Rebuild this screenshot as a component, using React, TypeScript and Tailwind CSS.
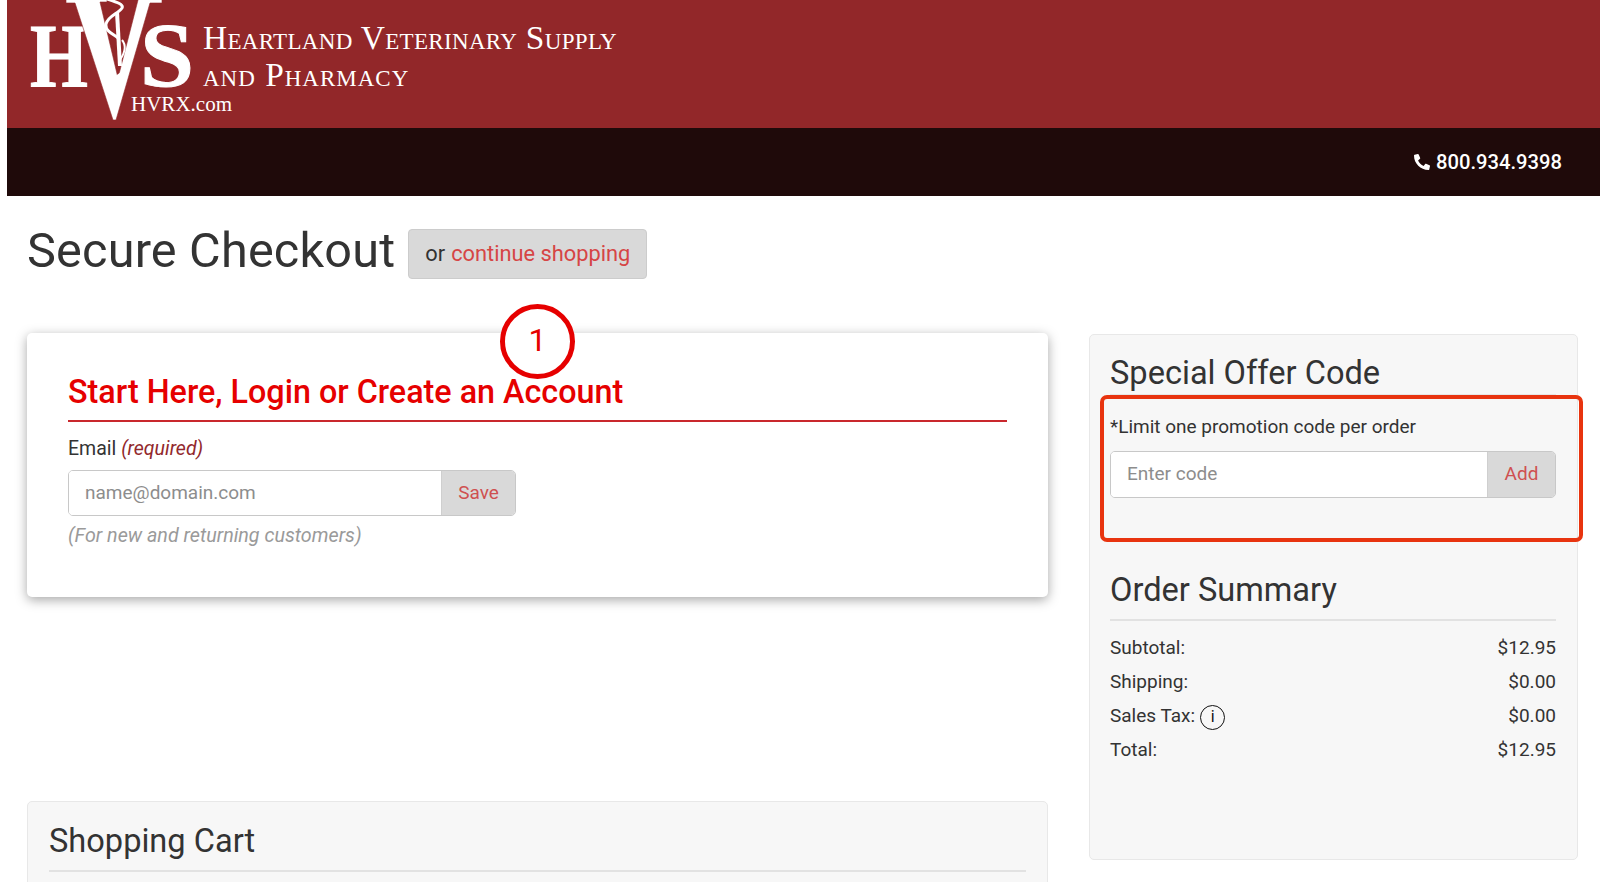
import React from "react";
import { FaPhone } from "react-icons/fa";

function Logo() {
  return (
    <svg width="196" height="128" viewBox="7 0 196 128" className="block shrink-0 overflow-visible">
      <text x="30" y="87" fill="#fff" stroke="#fff" strokeWidth="1" fontFamily="'Liberation Serif', serif" fontWeight="700" fontSize="90" textLength="58" lengthAdjust="spacingAndGlyphs">H</text>
      <text x="140" y="86" fill="#fff" stroke="#fff" strokeWidth="1" fontFamily="'Liberation Serif', serif" fontWeight="700" fontSize="92" textLength="54" lengthAdjust="spacingAndGlyphs">S</text>
      <path d="M66 -1H107V2H100L118 78L138 0H128V-1H162V3H150L116 120H113L75 3H66Z" fill="#fff" stroke="#922729" strokeWidth="0.6" />
      <path d="M104 -2C116 2 124 4 122 8C118 14 108 16 106 24C105 32 114 34 118 38" fill="none" stroke="#fff" strokeWidth="3" />
      <path d="M115 12L119 12L122 66L118 66Z" fill="#fff" />
      <path d="M122 40C127 46 124 54 120 60" fill="none" stroke="#fff" strokeWidth="2" />
      <path d="M113 78L126 68L123 80Z" fill="#fff" />
      <text x="131" y="111" fill="#fff" fontFamily="'Liberation Serif', serif" fontSize="20" textLength="101" lengthAdjust="spacingAndGlyphs">HVRX.com</text>
    </svg>
  );
}

function Heading({ children }: { children: React.ReactNode }) {
  return (
    <div className="border-b-2 border-[#e2e2e2] h-[55px] text-[32.6px] leading-[48px] text-[#333]">{children}</div>
  );
}

function Row({ label, value, info }: { label: string; value: string; info?: boolean }) {
  return (
    <div className="flex justify-between items-center h-[34px] text-[19px] text-[#333]">
      <span className="flex items-center">
        {label}
        {info && (
          <span className="ml-[5px] mt-[2px] w-[25px] h-[25px] rounded-full border-[1.5px] border-[#111] flex items-center justify-center text-[16px] leading-none text-[#111]">
            i
          </span>
        )}
      </span>
      <span>{value}</span>
    </div>
  );
}

function InputGroup({ placeholder, action, className, actionWidth }: { placeholder: string; action: string; className: string; actionWidth: string }) {
  return (
    <div className={`flex rounded-[5px] border border-[#c8c8c8] overflow-hidden ${className}`}>
      <div className="flex-1 bg-white pl-[16px] flex items-center text-[19px] text-[#8d8d8d]">{placeholder}</div>
      <div className={`bg-[#d9d9d9] flex items-center justify-center text-[19px] text-[#cf5050] border-l border-[#cfcfcf] ${actionWidth}`}>{action}</div>
    </div>
  );
}

export default function App() {
  return (
    <div className="w-[1600px] h-[882px] overflow-hidden bg-white font-['Roboto','Liberation_Sans',sans-serif]">
      <div className="ml-[7px]">
        <div className="h-[128px] bg-[#922729] flex overflow-hidden">
          <Logo />
          <div className="pt-[19px] font-['Liberation_Serif',serif] text-white text-[33.4px] leading-[37px] [font-variant:small-caps]">
            <div className="tracking-[0.33px]">Heartland Veterinary Supply</div>
            <div className="tracking-[1px]">and Pharmacy</div>
          </div>
        </div>
        <div className="h-[68px] bg-[#1f0a0a] flex items-center justify-end pr-[38px] text-white text-[20.2px] font-medium gap-[6px]">
          <FaPhone className="text-[16px] -scale-x-100" />
          <span>800.934.9398</span>
        </div>
      </div>

      <div className="pl-[27px] pr-[22px]">
        <div className="flex items-start pt-[26px] h-[137px]">
          <h1 className="text-[48.6px] leading-[58px] text-[#333] mr-[13px] tracking-[0.2px]">Secure Checkout</h1>
          <div className="mt-[7px] w-[239px] h-[50px] rounded-[4px] bg-[#d9d9d9] border border-[#ccc] flex items-center justify-center text-[21.8px] text-[#333] gap-[6px]">
            or <span className="text-[#d64545]">continue shopping</span>
          </div>
        </div>

        <div className="flex gap-[41px] items-start">
          <div className="w-[1021px] shrink-0">
            <div className="relative h-[264px] rounded-[5px] bg-white shadow-[0_3px_12px_rgba(0,0,0,0.35)] px-[41px] pt-[35px]">
              <div className="absolute left-[473px] -top-[29px] w-[75px] h-[75px] pb-[4px] rounded-full border-[5px] border-[#e60000] bg-white flex items-center justify-center text-[32px] text-[#e60000]">
                1
              </div>
              <div className="relative h-[54px] border-b-2 border-[#c9282d] text-[32.3px] leading-[48px] font-medium text-[#e60000]">
                Start Here, Login or Create an Account
              </div>
              <div className="mt-[13px] text-[19.5px] leading-[28px] text-[#333]">
                Email <em className="text-[#92282c]">(required)</em>
              </div>
              <InputGroup placeholder="name@domain.com" action="Save" className="mt-[7px] w-[448px] h-[46px]" actionWidth="w-[74px]" />
              <div className="mt-[6px] text-[19.7px] leading-[28px] italic text-[#9a9a9a]">(For new and returning customers)</div>
            </div>

            <div className="mt-[204px] h-[120px] rounded-[5px] border border-[#e8e8e8] bg-[#f7f7f7] px-[21px] pt-[15px]">
              <Heading>Shopping Cart</Heading>
            </div>
          </div>

          <div className="relative mt-[1px] w-[489px] h-[526px] rounded-[5px] border border-[#e8e8e8] bg-[#f7f7f7] pl-[20px] pr-[21px] pt-[14px]">
            <div className="absolute left-[10px] top-[60px] w-[483px] h-[147px] rounded-[7px] border-4 border-[#e8340f]" />
            <div className="h-[47px] border-b-2 border-[#e6e6e6] text-[32.6px] leading-[48px] text-[#333]">Special Offer Code</div>
            <div className="mt-[17px] text-[19px] leading-[28px] text-[#333]">*Limit one promotion code per order</div>
            <InputGroup placeholder="Enter code" action="Add" className="mt-[10px] h-[47px]" actionWidth="w-[68px]" />
            <div className="mt-[68px]">
              <Heading>Order Summary</Heading>
            </div>
            <div className="mt-[10px]">
              <Row label="Subtotal:" value="$12.95" />
              <Row label="Shipping:" value="$0.00" />
              <Row label="Sales Tax:" value="$0.00" info />
              <Row label="Total:" value="$12.95" />
            </div>
          </div>
        </div>
      </div>
    </div>
  );
}
